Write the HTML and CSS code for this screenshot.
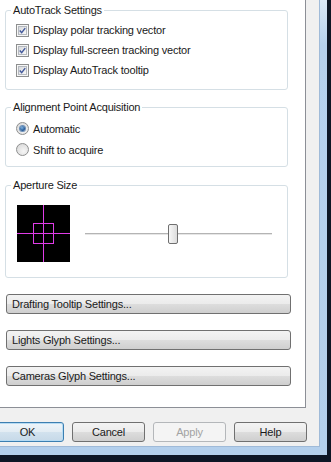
FILE: index.html
```html
<!DOCTYPE html>
<html lang="en">

<head>
  <meta charset="UTF-8">
  <title>Drafting Options</title>
  <link rel="stylesheet" href="styles.css">
</head>

<body>
  <div class="window">
    <div class="client">

      <div class="tab-page">

        <!-- AutoTrack -->
        <fieldset class="group group-track">
          <legend>AutoTrack Settings</legend>
          <label class="option">
            <span class="check"><svg width="9" height="9" viewBox="0 0 9 9"><path d="M1 4.6 L3.4 7.2 L8 1.4" fill="none" stroke="#41579a" stroke-width="1.8"/></svg></span>
            Display polar tracking vector
          </label>
          <label class="option">
            <span class="check"><svg width="9" height="9" viewBox="0 0 9 9"><path d="M1 4.6 L3.4 7.2 L8 1.4" fill="none" stroke="#41579a" stroke-width="1.8"/></svg></span>
            Display full-screen tracking vector
          </label>
          <label class="option">
            <span class="check"><svg width="9" height="9" viewBox="0 0 9 9"><path d="M1 4.6 L3.4 7.2 L8 1.4" fill="none" stroke="#41579a" stroke-width="1.8"/></svg></span>
            Display AutoTrack tooltip
          </label>
        </fieldset>

        <!-- Alignment -->
        <fieldset class="group group-align">
          <legend>Alignment Point Acquisition</legend>
          <label class="option tall"><span class="radio on"></span>Automatic</label>
          <label class="option tall"><span class="radio"></span>Shift to acquire</label>
        </fieldset>

        <!-- Aperture -->
        <fieldset class="group group-aperture">
          <legend>Aperture Size</legend>
          <div class="aperture-row">
            <div class="preview">
              <div class="cross-v"></div>
              <div class="cross-h"></div>
              <div class="cross-box"></div>
            </div>
            <div class="slider">
              <span class="thumb"></span>
            </div>
          </div>
        </fieldset>

        <button class="wide-btn">Drafting Tooltip Settings...</button>
        <button class="wide-btn">Lights Glyph Settings...</button>
        <button class="wide-btn">Cameras Glyph Settings...</button>
      </div>

      <div class="actions">
        <button class="btn default">OK</button>
        <button class="btn">Cancel</button>
        <button class="btn" disabled>Apply</button>
        <button class="btn">Help</button>
      </div>

    </div>
  </div>
</body>

</html>
```

FILE: styles.css
```css
* {
  margin: 0;
  padding: 0;
  box-sizing: border-box;
}

body {
  width: 331px;
  height: 462px;
  overflow: hidden;
  background: #0d1625;
  font-family: "Liberation Sans", Arial, sans-serif;
  font-size: 11px;
  letter-spacing: -0.2px;
  color: #1a1a1a;
}

/* window frame */
.window {
  width: 327px;
  height: 455px;
  padding: 0 7px 8px 0;
  background: linear-gradient(to bottom, #dbe9f7 0, #b7d2ee 45px, #b3cfec 100%);
}

.client {
  height: 100%;
  background: #f0f0f0;
  border-right: 1px solid #9fbad8;
  border-bottom: 1px solid #9fbad8;
}

.tab-page {
  width: 306px;
  height: 408px;
  background: #fff;
  border-right: 1px solid #8c8f96;
  border-bottom: 1px solid #8c8f96;
  padding-top: 3px;
}

/* Group boxes */
.group {
  width: 283px;
  margin-left: 5px;
  border: 1px solid #d5dfe5;
  border-radius: 3px;
  padding: 0 0 0 5px;
}

.group legend {
  padding: 0 2px;
  line-height: 14px;
}

.group-track {
  height: 87px;
  padding-top: 3px;
}

.group-align {
  height: 67px;
  margin-top: 10px;
  padding-top: 4px;
}

.group-aperture {
  height: 100px;
  margin-top: 11px;
  padding-top: 13px;
}

.option {
  display: flex;
  align-items: center;
  gap: 4px;
  height: 20px;
  margin-left: 5px;
}

.option.tall {
  height: 21px;
}

.check {
  width: 13px;
  height: 13px;
  border: 1px solid #8e8f8f;
  background: #f6f6f6;
  padding: 1px;
  display: flex;
}

.check svg {
  width: 9px;
  height: 9px;
  border: 1px solid #b5b9bf;
  background: linear-gradient(135deg, #d8dadd, #f7f7f7);
}

.radio {
  width: 13px;
  height: 13px;
  border-radius: 50%;
  border: 1px solid #8e8f8f;
  background: radial-gradient(circle at 60% 65%, #f6f6f6, #d4d4d4);
  display: flex;
  align-items: center;
  justify-content: center;
}

.radio.on::after {
  content: "";
  width: 5px;
  height: 5px;
  border-radius: 50%;
  background: radial-gradient(circle at 40% 35%, #7fb3e0, #1b4f8f 70%);
  box-shadow: 0 0 0 1px #6d8fb7;
}

/* Aperture */
.aperture-row {
  display: flex;
  align-items: center;
  margin-left: 6px;
}

.preview {
  width: 53px;
  height: 57px;
  background: #000;
  position: relative;
}

.cross-v {
  position: absolute;
  left: 26px;
  top: 0;
  width: 1px;
  height: 57px;
  background: #e03ce8;
}

.cross-h {
  position: absolute;
  left: 0;
  top: 28px;
  width: 53px;
  height: 1px;
  background: #e03ce8;
}

.cross-box {
  position: absolute;
  left: 16px;
  top: 18px;
  width: 21px;
  height: 21px;
  border: 1px solid #e03ce8;
}

.slider {
  width: 187px;
  height: 20px;
  margin-left: 15px;
  display: flex;
  align-items: center;
  background: linear-gradient(to bottom, transparent 9px, #b4b4b4 9px, #b4b4b4 10px, #e6e6e6 10px, #e6e6e6 11px, transparent 11px);
}

.thumb {
  width: 10px;
  height: 20px;
  margin-left: 83px;
  border: 1px solid #6f6f6f;
  border-radius: 2px;
  background: linear-gradient(to right, #f7f7f7, #dcdcdc);
}

/* Buttons */
button {
  font-family: inherit;
  font-size: 11px;
  letter-spacing: -0.2px;
  color: #1a1a1a;
  cursor: pointer;
}

.wide-btn {
  display: block;
  width: 285px;
  height: 20px;
  margin: 16px 0 0 6px;
  padding-left: 5px;
  text-align: left;
  border: 1px solid #707070;
  border-radius: 3px;
  background: linear-gradient(to bottom, #f3f3f3 0, #ebebeb 50%, #dddddd 50%, #cfcfcf 100%);
}

.actions {
  display: flex;
  gap: 8px;
  margin: 14px 0 0 -9px;
}

.btn {
  width: 73px;
  height: 20px;
  border: 1px solid #707070;
  border-radius: 3px;
  background: linear-gradient(to bottom, #f3f3f3 0, #ebebeb 50%, #dddddd 50%, #cfcfcf 100%);
}

.btn.default {
  border-color: #3c7fb1;
  box-shadow: inset 0 0 0 1px #b6dbf3;
  background: linear-gradient(to bottom, #eef5fa 0, #e2ecf3 50%, #d2e2ee 50%, #c6d9e8 100%);
}

.btn:disabled {
  color: #a3a3a3;
  border-color: #b4b7ba;
  background: #f4f4f4;
  cursor: default;
}
```
